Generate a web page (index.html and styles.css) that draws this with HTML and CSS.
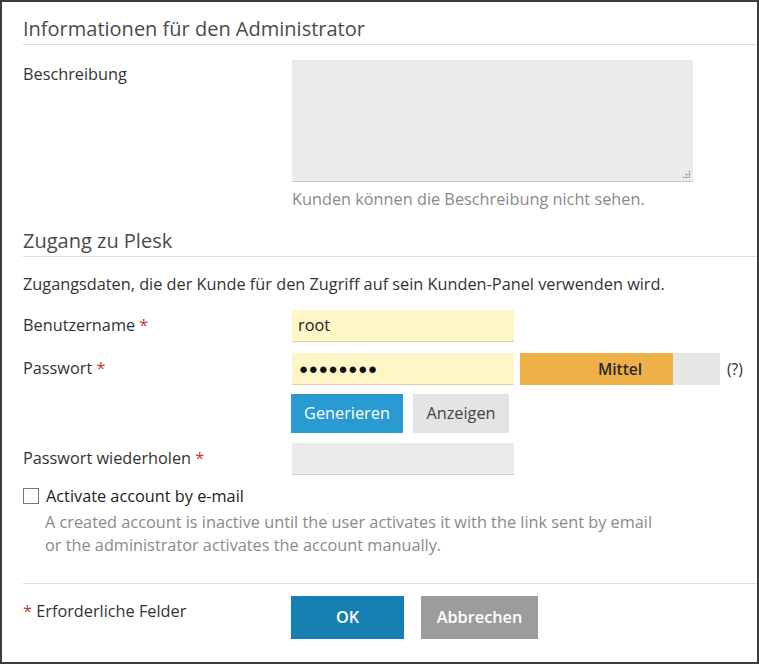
FILE: index.html
```html
<!DOCTYPE html>
<html lang="de">
<head>
<meta charset="utf-8">
<link rel="stylesheet" href="styles.css">
</head>
<body>
<div class="frame">
  <h2 class="section-title first">Informationen für den Administrator</h2>
  <div class="row row-desc">
    <div class="label">Beschreibung</div>
    <div class="control">
      <div class="textarea"><span class="grip"></span></div>
      <div class="hint">Kunden können die Beschreibung nicht sehen.</div>
    </div>
  </div>

  <h2 class="section-title second">Zugang zu Plesk</h2>
  <p class="intro">Zugangsdaten, die der Kunde für den Zugriff auf sein Kunden-Panel verwenden wird.</p>

  <div class="row row-user">
    <div class="label">Benutzername <span class="req">*</span></div>
    <div class="control"><div class="input filled">root</div></div>
  </div>
  <div class="row row-pass">
    <div class="label">Passwort <span class="req">*</span></div>
    <div class="control pass-line">
      <div class="input filled dots">●●●●●●●●</div>
      <div class="strength"><div class="strength-fill"></div><span class="strength-text">Mittel</span></div>
      <span class="help">(?)</span>
    </div>
  </div>
  <div class="row row-btns">
    <div class="label"></div>
    <div class="control btns">
      <span class="btn btn-blue">Generieren</span>
      <span class="btn btn-light">Anzeigen</span>
    </div>
  </div>
  <div class="row row-repeat">
    <div class="label">Passwort wiederholen <span class="req">*</span></div>
    <div class="control"><div class="input empty"></div></div>
  </div>

  <div class="check-row">
    <span class="checkbox"></span>
    <span class="check-label">Activate account by e-mail</span>
  </div>
  <div class="check-hint">A created account is inactive until the user activates it with the link sent by email<br>or the administrator activates the account manually.</div>

  <div class="footer">
    <div class="label"><span class="req">*</span> Erforderliche Felder</div>
    <div class="control footer-btns">
      <span class="btn btn-ok">OK</span>
      <span class="btn btn-cancel">Abbrechen</span>
    </div>
  </div>
</div>
</body>
</html>
```
FILE: styles.css
```css
html, body {
  margin: 0;
  padding: 0;
  background: #ffffff;
}
body {
  font-family: "Open Sans", "Liberation Sans", sans-serif;
  color: #333333;
  font-size: 16.3px;
}
.frame {
  width: 759px;
  height: 664px;
  box-sizing: border-box;
  border: 2px solid #3c3c3c;
  padding-left: 21px;
  overflow: hidden;
}
.section-title {
  margin: 0;
  font-weight: 400;
  font-size: 20px;
  line-height: 30px;
  color: #4b4b4b;
  border-bottom: 1px solid #dedede;
}
.section-title.first {
  margin-top: 12px;
}
.section-title.second {
  margin-top: 17px;
}
.row {
  display: flex;
  align-items: flex-start;
}
.label {
  width: 269px;
  flex: none;
  line-height: 20px;
  color: #333;
}
.req {
  color: #c0392b;
}
.control {
  flex: none;
}
.row-desc {
  margin-top: 15px;
}
.row-desc .label {
  padding-top: 4px;
}
.textarea {
  position: relative;
  width: 401px;
  height: 121px;
  background: #ebebeb;
  border-bottom: 1px solid #c9c9c9;
}
.grip {
  position: absolute;
  right: 3px;
  bottom: 3px;
  width: 8px;
  height: 8px;
  background:
    radial-gradient(circle, #9a9a9a 0.9px, transparent 1.2px) 0 0 / 3px 3px;
  clip-path: polygon(100% 0, 100% 100%, 0 100%);
}
.hint {
  margin-top: 7px;
  line-height: 20px;
  color: #8a8a8a;
}
.intro {
  margin: 17px 0 0;
  line-height: 20px;
  color: #333;
}
.row-user {
  margin-top: 16px;
}
.row-user .label, .row-pass .label, .row-repeat .label {
  padding-top: 5px;
}
.row-pass {
  margin-top: 11px;
}
.row-btns {
  margin-top: 9px;
}
.row-repeat {
  margin-top: 10px;
}
.input {
  width: 222px;
  box-sizing: border-box;
  height: 32px;
  padding: 0 6px;
  line-height: 31px;
  font-size: 16.3px;
  color: #222;
}
.filled {
  background: #fff6c7;
  border-bottom: 1px solid #d9d2ad;
}
.empty {
  background: #ebebeb;
  border-bottom: 1px solid #d0d0d0;
}
.dots {
  font-size: 15px;
  letter-spacing: 0.8px;
  color: #111;
  padding-left: 7px;
}
.pass-line {
  display: flex;
  align-items: center;
}
.strength {
  position: relative;
  margin-left: 6px;
  width: 200px;
  height: 32px;
  background: #e6e6e6;
}
.strength-fill {
  width: 153px;
  height: 32px;
  background: #eeb047;
}
.strength-text {
  position: absolute;
  left: 0;
  right: 0;
  top: 0;
  text-align: center;
  line-height: 32px;
  font-weight: 600;
  font-size: 15.5px;
  color: #2a2a2a;
}
.help {
  margin-left: 7px;
  font-size: 15.5px;
  color: #333;
}
.btns {
  display: flex;
  gap: 10px;
  margin-left: -1px;
}
.btn {
  display: inline-block;
  text-align: center;
  box-sizing: border-box;
}
.btn-blue {
  width: 112px;
  height: 39px;
  line-height: 39px;
  background: #2a9ad2;
  color: #ffffff;
}
.btn-light {
  width: 96px;
  height: 39px;
  line-height: 39px;
  background: #e4e4e4;
  color: #444;
}
.check-row {
  margin-top: 11px;
  display: flex;
  align-items: center;
  height: 20px;
}
.checkbox {
  width: 14px;
  height: 14px;
  border: 1px solid #777;
  background: #fff;
  flex: none;
}
.check-label {
  margin-left: 7px;
  line-height: 20px;
  color: #222;
}
.check-hint {
  margin-top: 5px;
  margin-left: 22px;
  line-height: 23px;
  color: #8a8a8a;
}
.footer {
  margin-top: 26px;
  border-top: 1px solid #dedede;
  padding-top: 12px;
  display: flex;
  align-items: flex-start;
}
.footer .label {
  padding-top: 5px;
}
.footer-btns {
  display: flex;
  gap: 17px;
  margin-left: -1px;
}
.btn-ok {
  width: 113px;
  height: 43px;
  line-height: 43px;
  background: #1680b3;
  color: #fff;
  font-weight: 600;
}
.btn-cancel {
  width: 117px;
  height: 43px;
  line-height: 43px;
  background: #9c9c9c;
  color: #fff;
  font-weight: 600;
}
```
